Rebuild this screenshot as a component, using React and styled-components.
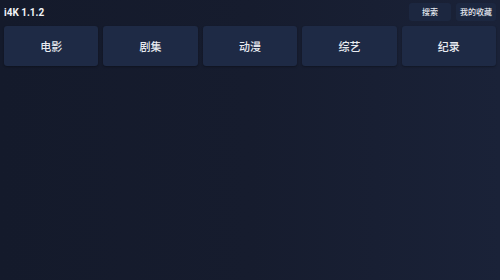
import styled, { createGlobalStyle } from "styled-components";

const GlobalStyle = createGlobalStyle`
  html, body {
    margin: 0;
    padding: 0;
    background: #151b2c;
  }
  body {
    font-family: Roboto, "Noto Sans CJK SC", sans-serif;
  }
`;

const Page = styled.div`
  width: 500px;
  height: 280px;
  box-sizing: border-box;
  padding: 2px 4px 0 4px;
  background: linear-gradient(90deg, #141a2b 0%, #161c2e 50%, #1a2238 100%);
  display: flex;
  flex-direction: column;
  gap: 5px;
  overflow: hidden;
`;

const TopBar = styled.div`
  display: flex;
  align-items: center;
  justify-content: space-between;
  height: 19px;
`;

const Title = styled.div`
  color: #f1f3f7;
  font-size: 10px;
  font-weight: 700;
  margin-top: 1px;
`;

const Actions = styled.div`
  display: flex;
  gap: 5px;
`;

const SmallButton = styled.div`
  height: 18px;
  padding: 0 ${(p) => p.$pad || 12}px;
  border-radius: 3px;
  background: #1c2740;
  color: #e4e8ef;
  font-size: 8px;
  font-weight: 500;
  display: flex;
  align-items: center;
  justify-content: center;
`;

const Categories = styled.div`
  display: grid;
  grid-template-columns: repeat(5, 1fr);
  gap: 5px;
`;

const Tile = styled.div`
  height: 40px;
  border-radius: 3px;
  background: #1e2a45;
  color: #e8ebf1;
  font-size: 11px;
  font-weight: 500;
  display: flex;
  align-items: center;
  justify-content: center;
  box-shadow: 0 1px 2px rgba(0, 0, 0, 0.3);
`;

const categories = ["电影", "剧集", "动漫", "综艺", "纪录"];

export default function App() {
  return (
    <>
      <GlobalStyle />
      <Page>
        <TopBar>
          <Title>i4K 1.1.2</Title>
          <Actions>
            <SmallButton $pad={13}>搜索</SmallButton>
            <SmallButton $pad={4}>我的收藏</SmallButton>
          </Actions>
        </TopBar>
        <Categories>
          {categories.map((c) => (
            <Tile key={c}>{c}</Tile>
          ))}
        </Categories>
      </Page>
    </>
  );
}
